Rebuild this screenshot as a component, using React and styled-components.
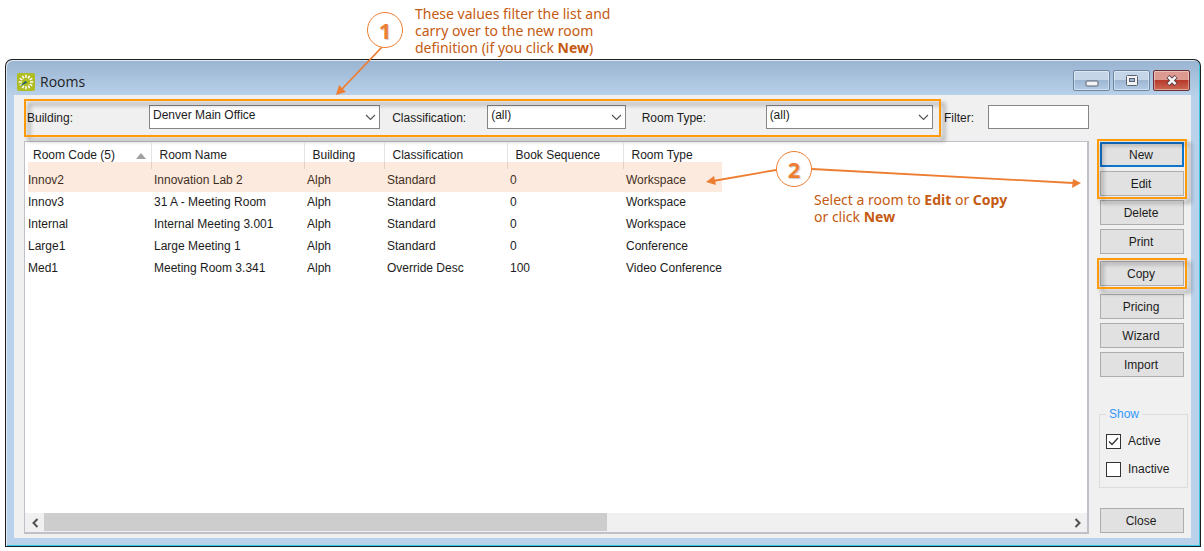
import React from "react";
import styled, { createGlobalStyle, css } from "styled-components";

const GlobalStyle = createGlobalStyle`
  *, *::before, *::after { box-sizing: border-box; }
  body { margin: 0; background: #fff; }
  button, input, select { font: inherit; color: inherit; }
`;

const orange = "#ed7d31";

const Page = styled.div`
  position: relative;
  display: flex;
  min-height: 100vh;
  padding: 59px 3px 4px 5px;
  font: 12px/16px "Liberation Sans", Arial, sans-serif;
  color: #1c1c1c;
`;

const Window = styled.section`
  flex: 1;
  display: flex;
  flex-direction: column;
  min-width: 0;
  border: 1px solid #1d1d22;
  border-bottom-color: #08262c;
  border-radius: 7px 7px 0 0;
  background: linear-gradient(#99b4d1, #b9d1ea 36px);
  box-shadow: inset 1px 1px 0 #dfe7ef, inset -1px -1px 0 #3cc8dc;
  padding: 0 9px 8px 8px;
`;

const TitleBar = styled.header`
  display: flex;
  align-items: center;
  gap: 5px;
  height: 35px;
  padding: 8px 1px 0 3px;
`;

const Title = styled.h1`
  flex: 1;
  margin: 0;
  font: 14px/20px "Open Sans", "Noto Sans", sans-serif;
  color: #222;
`;

const captionTones = {
  plain: css`
    border-color: #6f86a3;
    background: linear-gradient(#c4d5e8 45%, #9db6d2 50%, #b4cbe4);
  `,
  close: css`
    border-color: #6b2f33;
    background: linear-gradient(#dc9a90 45%, #b93a2c 50%, #cb6a54);
  `,
};

const CaptionButton = styled.button`
  display: flex;
  align-items: center;
  justify-content: center;
  width: 37px;
  height: 21px;
  padding: 0;
  border: 1px solid;
  border-radius: 2px;
  box-shadow: inset 0 0 0 1px rgba(255, 255, 255, 0.4);
  ${(p) => captionTones[p.$tone]}
`;

const CaptionButtons = styled.div`
  display: flex;
  gap: 3px;
  margin-top: -2px;
`;

const Body = styled.div`
  flex: 1;
  display: flex;
  gap: 11px;
  padding: 4px 7px 4px 10px;
  background: #f0f0f0;
`;

const Main = styled.main`
  flex: 1;
  min-width: 0;
  display: flex;
  flex-direction: column;
  gap: 4px;
`;

const highlightFrame = css`
  position: relative;
  &::after {
    content: "";
    position: absolute;
    inset: ${(p) => p.$inset || "0"};
    border: 2px solid #ff9a0a;
    filter: drop-shadow(4px 4px 2px rgba(0, 0, 0, 0.4));
    pointer-events: none;
  }
`;

const FilterBar = styled.form`
  display: flex;
  align-items: center;
  gap: 3px;
`;

const FilterGroup = styled.div`
  ${highlightFrame}
  flex: 1;
  display: flex;
  align-items: center;
  height: 38px;
  padding: 0 8px 3px 3px;
`;

const FieldLabel = styled.label`
  width: ${(p) => p.$width}px;
  flex: none;
  padding-top: 2px;
  white-space: nowrap;
`;

const SelectWrap = styled.span`
  position: relative;
  display: flex;
  flex: ${(p) => p.$grow} 1 0;
  min-width: 0;
  margin-right: ${(p) => p.$after || 0}px;
  svg {
    position: absolute;
    right: 4px;
    top: 9px;
    pointer-events: none;
  }
`;

const Select = styled.select`
  appearance: none;
  width: 100%;
  height: 24px;
  padding: 0 20px 3px 3px;
  border: 1px solid #858585;
  border-radius: 0;
  background: #fff;
`;

const SearchField = styled.div`
  display: flex;
  align-items: center;
  width: 145px;
  padding-bottom: 3px;
`;

const TextInput = styled.input`
  flex: 1;
  min-width: 0;
  height: 24px;
  padding: 0 4px;
  border: 1px solid #858585;
  border-radius: 0;
  background: #fff;
`;

const ListPanel = styled.div`
  flex: 1;
  display: flex;
  flex-direction: column;
  justify-content: space-between;
  border: 1px solid #c0c1c8;
  border-right-width: 2px;
  border-bottom-width: 2px;
  background: #fff;
`;

const TableArea = styled.div`
  position: relative;
`;

const RoomTable = styled.table`
  width: 100%;
  table-layout: fixed;
  border-collapse: collapse;
`;

const HeadCell = styled.th`
  position: relative;
  height: 27px;
  padding: 0 0 2px 8px;
  font-weight: normal;
  text-align: left;
  white-space: nowrap;
  border-right: 1px solid #e3e3e3;
  &:last-child { border-right: 0; }
  svg {
    position: absolute;
    right: 5px;
    top: 11px;
  }
`;

const Cell = styled.td`
  height: 22px;
  padding: 0 0 1px 3px;
  white-space: nowrap;
`;

const RowHighlight = styled.div`
  position: absolute;
  left: 3px;
  top: 20px;
  width: 694px;
  height: 30px;
  background: rgba(237, 125, 49, 0.16);
  pointer-events: none;
`;

const ScrollBar = styled.div`
  display: flex;
  height: 19px;
  background: #f0f0f0;
`;

const ScrollArrow = styled.button`
  display: flex;
  align-items: center;
  justify-content: center;
  width: 19px;
  padding: 0;
  border: 0;
  background: transparent;
`;

const ScrollTrack = styled.div`
  flex: 1;
`;

const ScrollThumb = styled.div`
  width: 55%;
  height: 18px;
  background: #cdcdcd;
`;

const Sidebar = styled.aside`
  display: flex;
  flex-direction: column;
  width: 84px;
  padding: 43px 0 1px;
`;

const ButtonGroup = styled.div`
  display: flex;
  flex-direction: column;
  gap: 4px;
  margin-bottom: ${(p) => p.$after}px;
  ${(p) => p.$marked && highlightFrame}
`;

const PushButton = styled.button`
  height: 25px;
  padding: 0 2px 0 0;
  border: ${(p) => (p.$primary ? "2px solid #0f74cc" : "1px solid #adadad")};
  background: #e1e1e1;
`;

const ShowGroup = styled.fieldset`
  display: flex;
  flex-direction: column;
  gap: 12px;
  min-width: 0;
  margin: 29px -4px 20px -1px;
  padding: 11px 6px 10px;
  border: 1px solid #dcdcdc;
  legend {
    padding: 0 3px;
    color: #3399ff;
  }
`;

const CheckLabel = styled.label`
  display: flex;
  align-items: center;
  gap: 7px;
`;

const CheckBox = styled.input`
  appearance: none;
  width: 15px;
  height: 15px;
  margin: 0;
  border: 1px solid #333;
  background: #fff;
`;

const CheckFace = styled.span`
  position: relative;
  display: flex;
  svg {
    position: absolute;
    inset: 0;
    pointer-events: none;
  }
`;

const Note = styled.p`
  position: absolute;
  left: ${(p) => p.$x}px;
  top: ${(p) => p.$y}px;
  margin: 0;
  font: 14px/17px "Noto Sans", "Open Sans", sans-serif;
  color: #c55a11;
  white-space: nowrap;
`;

const Marker = styled.span`
  position: absolute;
  left: ${(p) => p.$x}px;
  top: ${(p) => p.$y}px;
  width: 36px;
  height: 36px;
  border: 1px solid ${orange};
  border-radius: 50%;
  background: #fff;
  color: ${orange};
  font: bold 22px/35px "Noto Sans", "Open Sans", sans-serif;
  text-align: center;
  text-shadow: 1px 1px 1px rgba(0, 0, 0, 0.2);
`;

const ArrowLayer = styled.svg`
  position: absolute;
  left: 0;
  top: 0;
  overflow: visible;
  pointer-events: none;
`;

function AppIcon() {
  const rays = Array.from({ length: 12 }, (_, i) => i * 30);
  return (
    <svg width="18" height="18" viewBox="0 0 18 18" aria-hidden="true">
      <rect width="18" height="18" rx="2" fill="#afbd22" />
      {rays.map((a) => (
        <path key={a} d="M9 4.8V1.8" stroke="#fff" strokeWidth="1.5" transform={`rotate(${a} 9 9)`} />
      ))}
      <path d="M2.500 13.500 8.400 8 10.200 9.600Z" fill="#145a66" />
    </svg>
  );
}

function DropArrow() {
  return (
    <svg width="11" height="7" viewBox="0 0 11 7" aria-hidden="true">
      <path d="M1 1 5.5 5.5 10 1" fill="none" stroke="#555" strokeWidth="1.2" />
    </svg>
  );
}

function Chevron({ right }) {
  return (
    <svg width="8" height="10" viewBox="0 0 8 10" aria-hidden="true">
      <path d={right ? "M1.5 1 5.5 5 1.5 9" : "M6.5 1 2.5 5 6.5 9"} fill="none" stroke="#505050" strokeWidth="2" />
    </svg>
  );
}

function Combo({ id, label, labelWidth, value, grow, after }) {
  return (
    <>
      <FieldLabel htmlFor={id} $width={labelWidth}>{label}</FieldLabel>
      <SelectWrap $grow={grow} $after={after}>
        <Select id={id} defaultValue={value}>
          <option>{value}</option>
        </Select>
        <DropArrow />
      </SelectWrap>
    </>
  );
}

function Check({ label, checked }) {
  const [on, setOn] = React.useState(checked);
  return (
    <CheckLabel>
      <CheckFace>
        <CheckBox type="checkbox" checked={on} onChange={() => setOn(!on)} />
        {on && (
          <svg width="15" height="15" viewBox="0 0 15 15" aria-hidden="true">
            <path d="M3 7.5 6 10.5 12 4" fill="none" stroke="#333" strokeWidth="1.3" />
          </svg>
        )}
      </CheckFace>
      {label}
    </CheckLabel>
  );
}

const columns = [
  { name: "Room Code (5)", width: 126, sorted: true },
  { name: "Room Name", width: 153 },
  { name: "Building", width: 80 },
  { name: "Classification", width: 123 },
  { name: "Book Sequence", width: 116 },
  { name: "Room Type" },
];

const rooms = [
  ["Innov2", "Innovation Lab 2", "Alph", "Standard", "0", "Workspace"],
  ["Innov3", "31 A - Meeting Room", "Alph", "Standard", "0", "Workspace"],
  ["Internal", "Internal Meeting 3.001", "Alph", "Standard", "0", "Workspace"],
  ["Large1", "Large Meeting 1", "Alph", "Standard", "0", "Conference"],
  ["Med1", "Meeting Room 3.341", "Alph", "Override Desc", "100", "Video Conference"],
];

export default function App() {
  return (
    <Page>
      <GlobalStyle />
      <Window>
        <TitleBar>
          <AppIcon />
          <Title>Rooms</Title>
          <CaptionButtons>
            <CaptionButton $tone="plain" aria-label="Minimize">
              <svg width="14" height="12" viewBox="0 0 14 12">
                <rect x="1" y="6" width="12" height="5" rx="1" fill="#f4f4f4" stroke="#5a6272" />
              </svg>
            </CaptionButton>
            <CaptionButton $tone="plain" aria-label="Maximize">
              <svg width="12" height="11" viewBox="0 0 12 11">
                <rect x="0.5" y="0.5" width="11" height="10" rx="1" fill="#f4f4f4" stroke="#5a6272" />
                <rect x="3.5" y="3.5" width="5" height="3" fill="#9db6d2" stroke="#5a6272" />
              </svg>
            </CaptionButton>
            <CaptionButton $tone="close" aria-label="Close window">
              <svg width="14" height="11" viewBox="0 0 14 11">
                <path d="M3 1.5 11 9.5M11 1.5 3 9.5" stroke="#5a3a44" strokeWidth="4.4" />
                <path d="M3.4 1.9 10.6 9.1M10.6 1.9 3.4 9.1" stroke="#f7f7f7" strokeWidth="2.6" />
              </svg>
            </CaptionButton>
          </CaptionButtons>
        </TitleBar>

        <Body>
          <Main>
            <FilterBar>
              <FilterGroup>
                <Combo id="building" label="Building:" labelWidth={122} value="Denver Main Office" grow={232} after={12} />
                <Combo id="classification" label="Classification:" labelWidth={95} value="(all)" grow={139} after={16} />
                <Combo id="roomType" label="Room Type:" labelWidth={124} value="(all)" grow={168} />
              </FilterGroup>
              <SearchField>
                <FieldLabel htmlFor="filter" $width={44}>Filter:</FieldLabel>
                <TextInput id="filter" type="text" />
              </SearchField>
            </FilterBar>

            <ListPanel>
              <TableArea>
                <RoomTable>
                  <colgroup>
                    {columns.map((c) => <col key={c.name} width={c.width} />)}
                  </colgroup>
                  <thead>
                    <tr>
                      {columns.map((c) => (
                        <HeadCell key={c.name} scope="col">
                          {c.name}
                          {c.sorted && (
                            <svg width="10" height="6" viewBox="0 0 10 6" aria-hidden="true">
                              <path d="M0 6 5 0 10 6Z" fill="#a0a0a0" />
                            </svg>
                          )}
                        </HeadCell>
                      ))}
                    </tr>
                  </thead>
                  <tbody>
                    {rooms.map((r) => (
                      <tr key={r[0]}>
                        {r.map((v, i) => <Cell key={i}>{v}</Cell>)}
                      </tr>
                    ))}
                  </tbody>
                </RoomTable>
                <RowHighlight />
              </TableArea>
              <ScrollBar>
                <ScrollArrow aria-label="Scroll left"><Chevron /></ScrollArrow>
                <ScrollTrack><ScrollThumb /></ScrollTrack>
                <ScrollArrow aria-label="Scroll right"><Chevron right /></ScrollArrow>
              </ScrollBar>
            </ListPanel>
          </Main>

          <Sidebar>
            <ButtonGroup $marked $inset="-3px" $after={4}>
              <PushButton $primary>New</PushButton>
              <PushButton>Edit</PushButton>
            </ButtonGroup>
            <ButtonGroup $after={7}>
              <PushButton>Delete</PushButton>
              <PushButton>Print</PushButton>
            </ButtonGroup>
            <ButtonGroup $marked $inset="-3px" $after={8}>
              <PushButton>Copy</PushButton>
            </ButtonGroup>
            <ButtonGroup $after={0}>
              <PushButton>Pricing</PushButton>
              <PushButton>Wizard</PushButton>
              <PushButton>Import</PushButton>
            </ButtonGroup>
            <ShowGroup>
              <legend>Show</legend>
              <Check label="Active" checked />
              <Check label="Inactive" checked={false} />
            </ShowGroup>
            <PushButton>Close</PushButton>
          </Sidebar>
        </Body>
      </Window>

      <ArrowLayer width="1" height="1" aria-hidden="true">
        <g stroke={orange} strokeWidth="1.8" fill={orange}>
          <path d="M382 47 342 89M776 170 713 181M812 169 1073 183" />
          <g stroke="none">
            <path d="M336 95 339 85 346 92Z" />
            <path d="M706 182 714 176 716 185Z" />
            <path d="M1081 183 1072 188 1073 179Z" />
          </g>
        </g>
      </ArrowLayer>
      <Marker $x={367} $y={12}>1</Marker>
      <Marker $x={776} $y={151}>2</Marker>
      <Note $x={415} $y={5}>
        These values filter the list and<br />
        carry over to the new room<br />
        definition (if you click <b>New</b>)
      </Note>
      <Note $x={814} $y={191}>
        Select a room to <b>Edit</b> or <b>Copy</b><br />
        or click <b>New</b>
      </Note>
    </Page>
  );
}
